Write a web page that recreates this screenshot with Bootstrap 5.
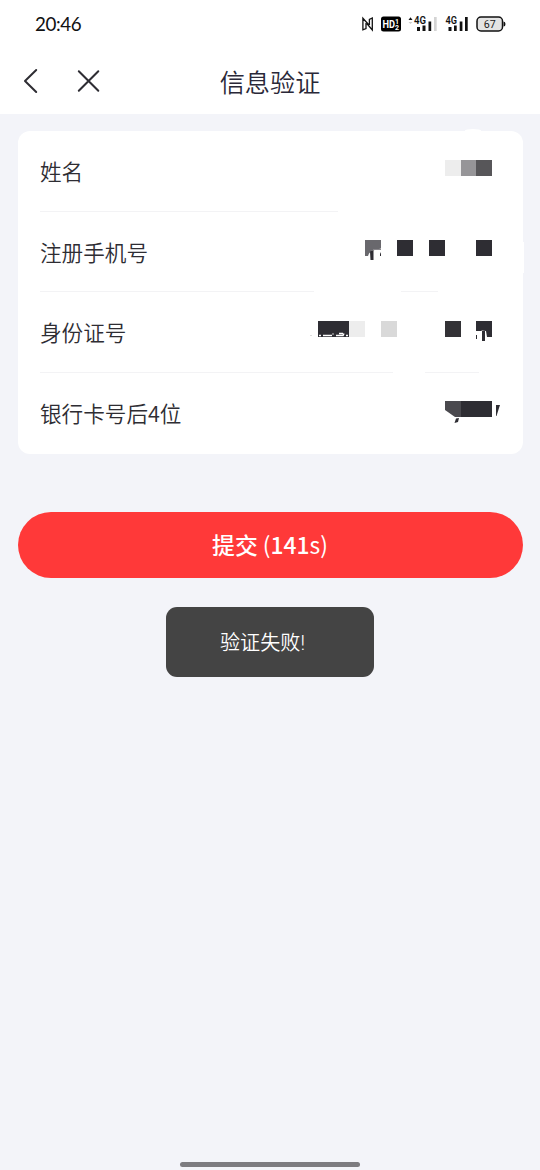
<!DOCTYPE html>
<html lang="zh-CN">
<head>
<meta charset="utf-8">
<meta name="viewport" content="width=device-width, initial-scale=1">
<title>信息验证</title>
<link href="https://cdn.jsdelivr.net/npm/bootstrap@5.3.0/dist/css/bootstrap.min.css" rel="stylesheet">
<style>
body{background:#f3f4f9;color:#2e2d33;font-family:"Noto Sans CJK SC",sans-serif;height:1170px;overflow:hidden}
.status-bar{height:48px;padding:0 34px 0 35px;color:#111}
.clock{font:18.8px/48px Lato,sans-serif;letter-spacing:-.4px}
.title-bar{height:66px}
.title-bar h1{font-size:25.2px;line-height:66px;font-weight:350;color:#2a2838}
.nav-icons{left:0;top:0}
.form-card{margin:17px 17.5px 0;border-radius:12px;display:grid;grid-template-rows:80px 1px 79px 1px 80px 1px 81px}
.card-notch{width:16px;height:3px;right:42px;top:-2px;border-radius:50% 50% 0 0}
.card-edge{width:3px;height:31px;right:-1.5px;top:111px}
.field-row{padding-left:22.5px;font-size:21.6px;font-weight:350}
.field-row>span{padding-top:1px}
.field-row:last-child>span{padding-top:0}
.rule-line{margin-left:22.5px}
.rule-line span{background:#f3f3f5;height:1px}
.submit-btn{height:66px;margin:57.5px 17.5px 0;background:#ff3939;border:0;font-size:22.8px;font-weight:500;color:#fff;padding:2px 0 0}
.toast-box{width:208px;height:70px;margin-top:29.5px;background:#444;border-radius:11px;color:#fff;font-size:20.1px;font-weight:350;padding:2px 0 0 54px}
.home-bar{width:180px;height:5px;background:#7d7c80;bottom:3px}
</style>
</head>
<body class="d-flex flex-column position-relative">
<header class="bg-white">
  <div class="status-bar d-flex justify-content-between align-items-center">
    <span class="clock">20:46</span>
    <svg width="146" height="20" viewBox="360 14 146 20" fill="none" font-family="Roboto,sans-serif">
      <path d="M366 23V28.500L362.900 29.800V18.200L368.500 24.500M369.400 25V19.300L372.300 18V30L366.800 23.500" stroke="#111" stroke-width="1.300"/>
      <rect x="381" y="16.500" width="20" height="15" rx="2.500" fill="#000"/>
      <text x="382.500" y="28" font-size="10.500" font-weight="700" fill="#fff" textLength="12.500" lengthAdjust="spacingAndGlyphs">HD</text>
      <text x="395" y="23.800" font-size="7" font-weight="700" fill="#fff">1</text>
      <text x="395" y="30" font-size="7" font-weight="700" fill="#fff">2</text>
      <path d="M408.500 20l2-2.700 2 2.700z" fill="#111"/><path d="M408.500 22l2 2 2-2z" fill="#ccc"/>
      <g font-size="10" font-weight="600" fill="#111"><text x="414" y="23.500" textLength="12" lengthAdjust="spacingAndGlyphs">4G</text><text x="445.500" y="23.500" textLength="11.500" lengthAdjust="spacingAndGlyphs">4G</text></g>
      <g fill="#111"><path d="M417 27h3v4h-3zM422.500 25.500h3v5.500h-3zM428.500 21.500h2.700V31h-2.700zM448.500 27h3v4h-3zM454 25.500h2.700V31H454zM459.700 21.500h2.700V31h-2.700zM465 17h2.700v14H465z"/><path fill="#d4d4d4" d="M434 17h2.700v14H434z"/></g>
      <rect x="477" y="17" width="25.500" height="14" rx="4" fill="#e4e4e4" stroke="#111" stroke-width="1.500"/>
      <path d="M503.500 21.500q2 0 2 2.500t-2 2.500z" fill="#111"/>
      <text x="483.800" y="27.900" font-size="10.500" fill="#222" textLength="12" lengthAdjust="spacingAndGlyphs">67</text>
    </svg>
  </div>
  <div class="title-bar position-relative">
    <svg class="nav-icons position-absolute" width="120" height="66" viewBox="0 48 120 66" fill="none" stroke="#2e2d33" stroke-width="2" stroke-linecap="round" stroke-linejoin="round"><path d="M36.200 70L25 81L36.200 92M78.800 71.200l19.500 19.500M98.300 71.200L78.800 90.700"/></svg>
    <h1 class="text-center m-0">信息验证</h1>
  </div>
</header>
<main>
  <section class="form-card bg-white position-relative">
    <i class="card-notch bg-white position-absolute"></i>
    <i class="card-edge bg-white position-absolute"></i>
    <div class="field-row d-flex justify-content-between align-items-center">
      <span>姓名</span>
      <svg width="222.500" height="80" viewBox="300 131 222.500 80" shape-rendering="crispEdges"><path fill="#ededed" d="M445 160h16v16h-16z"/><path fill="#969598" d="M461 160h15v16h-15z"/><path fill="#575659" d="M476 160h16v16h-16z"/></svg>
    </div>
    <div class="rule-line d-flex"><span style="width:298px"></span></div>
    <div class="field-row d-flex justify-content-between align-items-center">
      <span>注册手机号</span>
      <svg width="222.500" height="79" viewBox="300 212 222.500 79" fill="#2e2d33"><path fill="#69686d" d="M365 240h16v8.500l-6 1.500-3 .5-3 3-1 2.500h-3z"/><path d="M370 251.500l3.500-1.500v10h-3zM380 254l1-2v4h-1z"/><path d="M373 249h8v1h-8z" fill="#88868b"/><path d="M397 240h16v16h-16zM429 240h16v16h-16zM476 240h16v16h-16z" shape-rendering="crispEdges"/></svg>
    </div>
    <div class="rule-line d-flex"><span style="width:274px"></span><span style="width:37px;margin-left:87px"></span></div>
    <div class="field-row d-flex justify-content-between align-items-center">
      <span>身份证号</span>
      <svg width="222.500" height="80" viewBox="300 292 222.500 80" fill="#2e2d33"><path d="M318 321h31v16h-31z"/><path d="M445 321h16v16h-16z" fill="#333236"/><path d="M476 321h16v16h-5l-1-6-4-.5-1 .5h-5zM482 331h3v10h-3zM476 335h1v4h-1z"/><path fill="#ededed" d="M349 321h16v16h-16z"/><path fill="#d9d9d9" d="M381 321h16v16h-16z"/><path d="M319 335.500h2M323 335.500h9M336 335.500h7l1-2M333 333.500v1M339 333.500h4M346 335.500h2" stroke="#fff" stroke-width="1.500" fill="none"/><path fill="#ddd" d="M310 335h2v1h-2z"/></svg>
    </div>
    <div class="rule-line d-flex"><span style="width:353px"></span><span style="width:54px;margin-left:32px"></span></div>
    <div class="field-row d-flex justify-content-between align-items-center">
      <span>银行卡号后4位</span>
      <svg width="222.500" height="81" viewBox="300 373 222.500 81" fill="#2e2d33"><path fill="#4a494e" d="M445 401h16v16h-6l-10-7z"/><path d="M461 401h31v16h-31z"/><path d="M496 405h4l-1 3-2.500 8h-.5zM456 418.500l3-.5-1 4-3.500 1z"/></svg>
    </div>
  </section>
  <div class="d-grid"><button class="submit-btn btn rounded-pill" type="button">提交 <span class="fw-normal">(</span>141<span class="fw-normal">s)</span></button></div>
  <div class="toast-box d-flex align-items-center mx-auto" role="alert"><span>验证失败<span style="font-family:Roboto,sans-serif">!</span></span></div>
</main>
<div class="home-bar position-absolute start-50 translate-middle-x rounded-pill"></div>
<script src="https://cdn.jsdelivr.net/npm/bootstrap@5.3.0/dist/js/bootstrap.bundle.min.js"></script>
</body>
</html>
